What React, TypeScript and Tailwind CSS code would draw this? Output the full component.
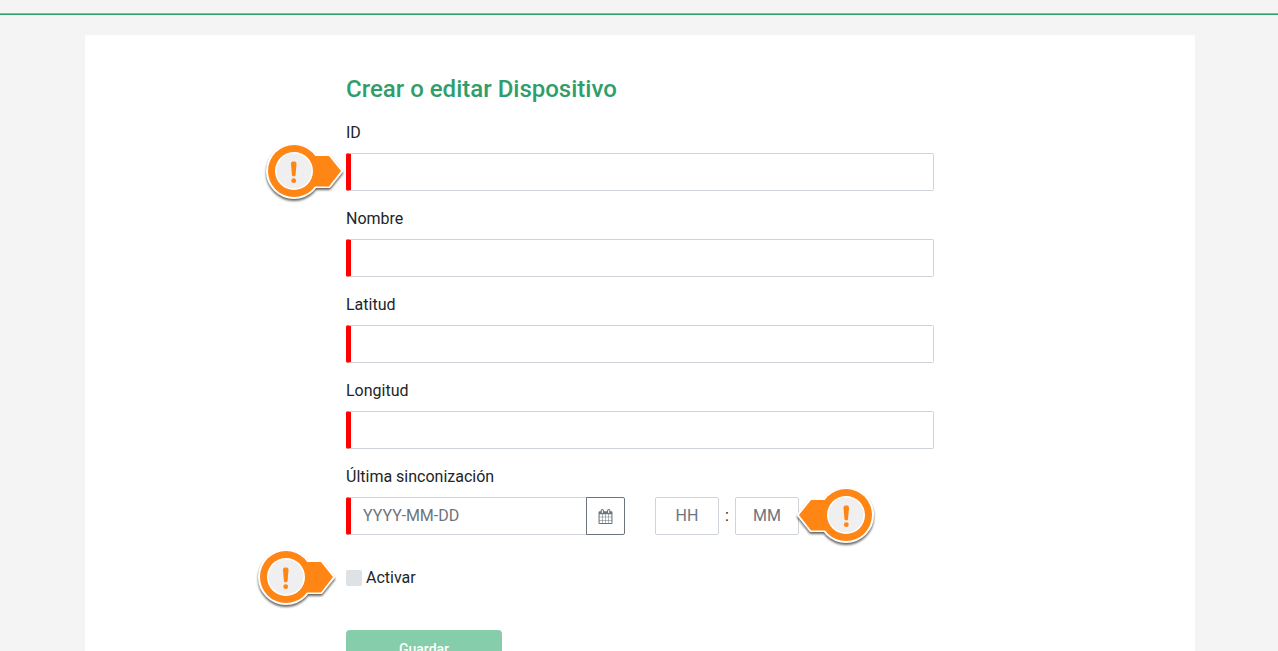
type FieldProps = {
  id: string;
  label: string;
  marked?: boolean;
};

type MarkerProps = {
  className: string;
  direction?: "left" | "right";
};

const inputBase =
  "h-[38px] rounded-xs border border-[#ced4da] bg-white pb-0.5 text-base text-[#212529] placeholder:text-[#6c757d] placeholder:opacity-100 focus:outline-none focus:border-[#2f9e6b]";

const requiredInput = `${inputBase} border-l-5 border-l-[#ff0000] px-3`;

function Marker({ className, direction = "right" }: MarkerProps) {
  return (
    <svg
      className={`pointer-events-none absolute drop-shadow-[0_2px_1px_rgba(0,0,0,0.6)] ${className}`}
      width="84"
      height="64"
      viewBox="0 0 84 64"
      aria-hidden="true"
    >
      <g transform={direction === "left" ? "translate(84 0) scale(-1 1)" : undefined}>
        <g fill="#fff" stroke="#fff" strokeWidth="4" strokeLinejoin="round">
          <circle cx="30" cy="30" r="26" />
          <path d="M30 15H65L77 30L65 45H30Z" />
        </g>
        <g fill="#ff8515">
          <circle cx="30" cy="30" r="26" />
          <path d="M30 15H65L77 30L65 45.500H30Z" />
        </g>
        <circle cx="30" cy="30" r="19" fill="#fff" />
        <circle cx="30" cy="30" r="17.500" fill="#efefef" />
        <path
          d="M27 23C27 21 28 20.500 29.700 20.500S32.500 21 32.500 23L31.600 33.500C31.400 35 31 35.300 29.700 35.300S28.100 35 27.900 33.500Z"
          fill="#ff8515"
        />
        <circle cx="29.700" cy="39.700" r="2.400" fill="#ff8515" />
      </g>
    </svg>
  );
}

function CalendarIcon() {
  return (
    <svg width="15" height="15" viewBox="0 0 1792 1792" fill="currentColor" aria-hidden="true">
      <path d="M192 1664h288v-288h-288v288zm352 0h320v-288h-320v288zm-352-352h288v-320h-288v320zm352 0h320v-320h-320v320zm-352-384h288v-288h-288v288zm736 736h320v-288h-320v288zm-384-736h320v-288h-320v288zm768 736h288v-288h-288v288zm-384-352h320v-320h-320v320zm-352-864v-288q0-13-9.500-22.500t-22.500-9.500h-64q-13 0-22.500 9.500t-9.500 22.500v288q0 13 9.500 22.500t22.500 9.500h64q13 0 22.500-9.500t9.500-22.500zm736 864h288v-320h-288v320zm-384-384h320v-288h-320v288zm384 0h288v-288h-288v288zm32-480v-288q0-13-9.500-22.500t-22.500-9.500h-64q-13 0-22.500 9.500t-9.500 22.500v288q0 13 9.500 22.500t22.500 9.500h64q13 0 22.500-9.500t9.500-22.500zm384-64v1280q0 52-38 90t-90 38h-1408q-52 0-90-38t-38-90v-1280q0-52 38-90t90-38h128v-96q0-66 47-113t113-47h64q66 0 113 47t47 113v96h384v-96q0-66 47-113t113-47h64q66 0 113 47t47 113v96h128q52 0 90 38t38 90z" />
    </svg>
  );
}

function Field({ id, label, marked }: FieldProps) {
  return (
    <div className="mb-4">
      <label htmlFor={id} className="mb-2 block">
        {label}
      </label>
      <div className="relative flex">
        <input id={id} type="text" required className={`${requiredInput} w-full`} />
        {marked && <Marker className="-left-[82px] -top-3" />}
      </div>
    </div>
  );
}

export default function App() {
  return (
    <div className="min-h-screen bg-[#f4f4f4] font-['Roboto',sans-serif] text-base text-[#212529]">
      <header className="h-[15px] border-b border-[#2f9e6b]">
        <div className="h-full border-b border-[#b5a5a5]" />
      </header>

      <main className="pt-5 pl-0.5">
        <div className="mx-auto max-w-[1110px] rounded-xs bg-white pt-10 pb-10">
          <form className="mx-auto max-w-[588px]" onSubmit={(e) => e.preventDefault()}>
            <h2 className="mb-[18px] text-2xl leading-7 font-medium text-[#2f9e6b]">
              Crear o editar Dispositivo
            </h2>

            <Field id="device-id" label="ID" marked />
            <Field id="name" label="Nombre" />
            <Field id="latitude" label="Latitud" />
            <Field id="longitude" label="Longitud" />

            <label htmlFor="sync-date" className="mb-2 block">
              Última sinconización
            </label>
            <div className="flex items-center">
              <div className="mr-[30px] flex">
                <input
                  id="sync-date"
                  type="text"
                  placeholder="YYYY-MM-DD"
                  required
                  className={`${requiredInput} w-[241px] rounded-r-none`}
                />
                <button
                  type="button"
                  aria-label="Calendario"
                  className="-ml-px flex h-[38px] w-[39px] items-center justify-center rounded-r-xs border border-[#6c757d] text-[#6c757d]"
                >
                  <CalendarIcon />
                </button>
              </div>
              <input
                type="text"
                placeholder="HH"
                aria-label="Horas"
                maxLength={2}
                className={`${inputBase} w-16 text-center`}
              />
              <span className="w-4 text-center">:</span>
              <div className="relative flex">
                <input
                  type="text"
                  placeholder="MM"
                  aria-label="Minutos"
                  maxLength={2}
                  className={`${inputBase} w-16 text-center`}
                />
                <Marker className="left-[57px] -top-3" direction="left" />
              </div>
            </div>

            <div className="relative mt-[31px] mb-10 flex items-center gap-1">
              <input
                id="active"
                type="checkbox"
                className="size-4 appearance-none rounded-xs bg-[#dee2e6] checked:bg-[#2f9e6b]"
              />
              <label htmlFor="active">Activar</label>
              <Marker className="-left-[90px] -top-[19px]" />
            </div>

            <button
              type="submit"
              className="h-[38px] w-[156px] rounded-sm bg-[#86cdab] text-sm font-medium text-white"
            >
              Guardar
            </button>
          </form>
        </div>
      </main>
    </div>
  );
}
